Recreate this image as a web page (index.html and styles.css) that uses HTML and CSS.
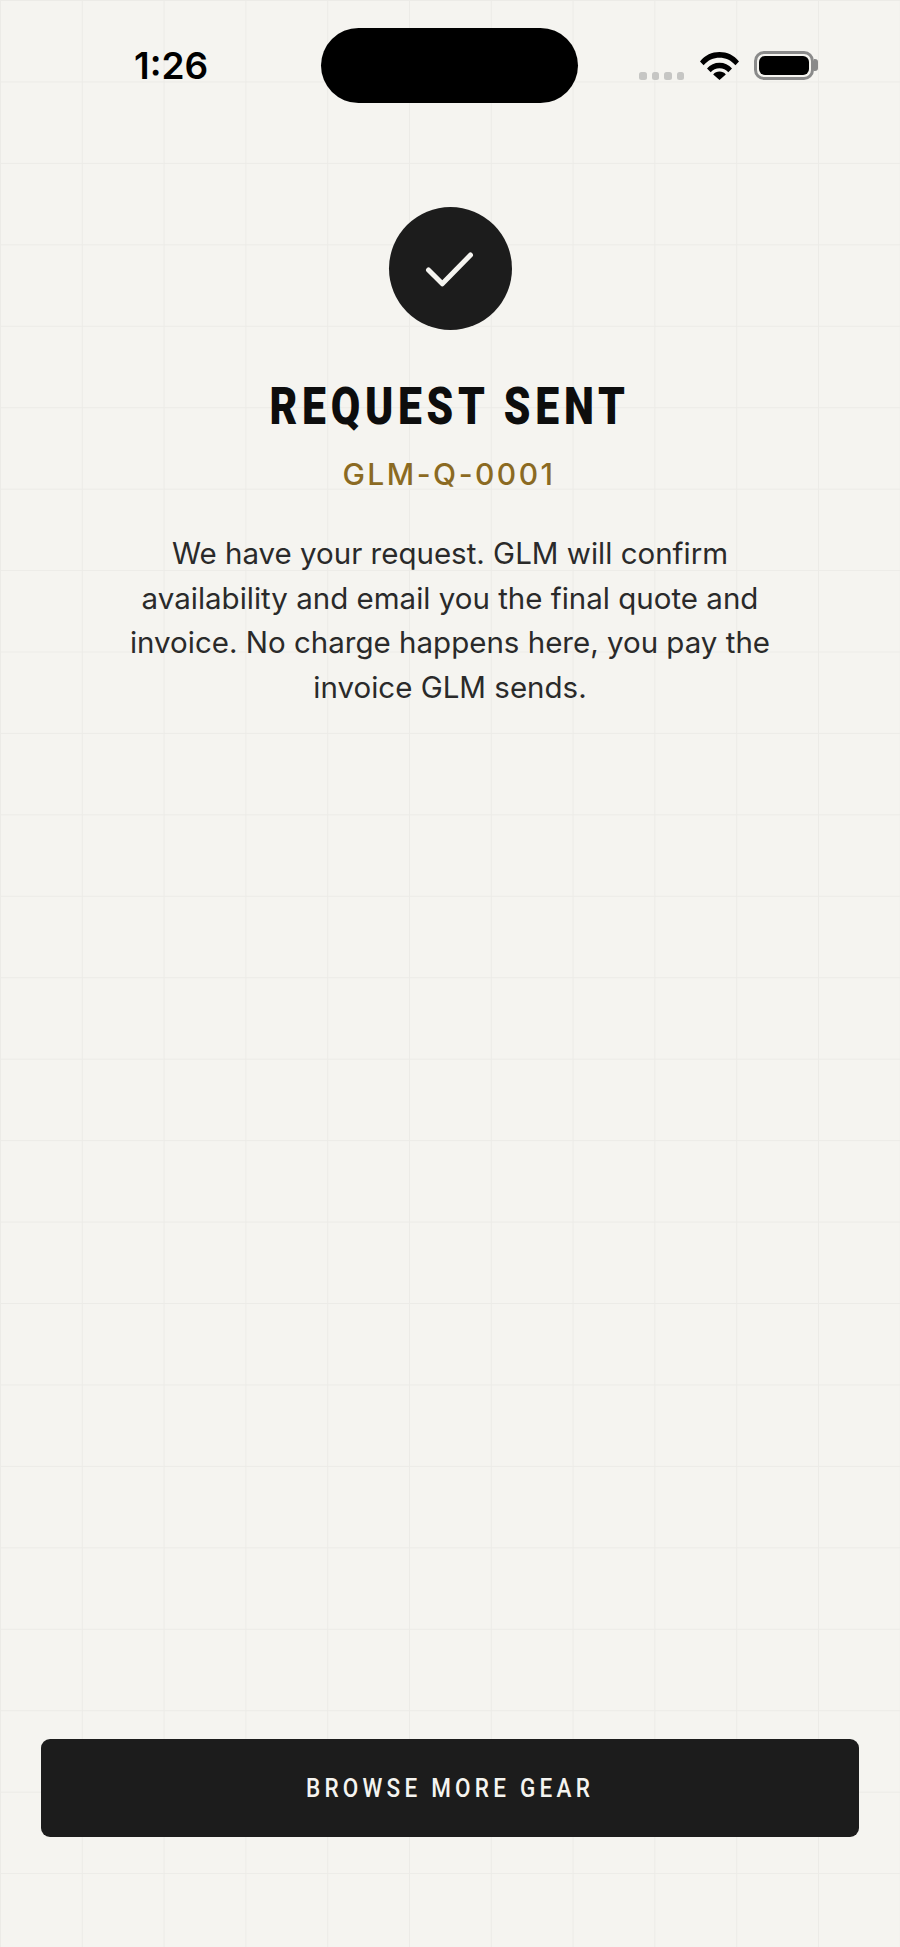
FILE: index.html
```html
<!DOCTYPE html>
<html lang="en">
  <head>
    <meta charset="UTF-8" />
    <meta name="viewport" content="width=device-width, initial-scale=1.0" />
    <title>Request Sent</title>
    <link rel="stylesheet" href="styles.css">
  </head>
  <body>
    <div class="page">
      <header class="status-bar">
        <div class="status-time">1:26</div>
        <div class="island"></div>
        <div class="status-icons">
          <div class="signal-dots">
            <span class="dot"></span>
            <span class="dot"></span>
            <span class="dot"></span>
            <span class="dot"></span>
          </div>
          <svg class="wifi" width="39" height="29" viewBox="0 0 39 29">
            <path d="M0 10.5C5 4 12 1 19.5 1S34 4 39 10.5l-3.6 3.7C31 9.2 25.5 6.8 19.5 6.8S8 9.2 3.6 14.2z" />
            <path d="M7 17.6C10.2 13.8 14.6 11.800 19.5 11.800s9.3 2 12.5 5.800l-3.700 3.700c-2.300-2.700-5.300-4.100-8.800-4.100s-6.500 1.400-8.800 4.100z" />
            <path d="M13.200 23.400c1.600-1.800 3.800-2.800 6.300-2.800s4.700 1 6.300 2.800L19.500 29z" />
          </svg>
          <div class="battery">
            <div class="battery-level"></div>
          </div>
        </div>
      </header>

      <main class="confirmation">
        <div class="check-circle">
          <svg width="54" height="40" viewBox="0 0 54 40">
            <path d="M5.500 21L19.300 34.800L47.500 6" />
          </svg>
        </div>
        <h1 class="title"><span class="title-text">REQUEST SENT</span></h1>
        <p class="quote-code">GLM-Q-0001</p>
        <p class="message">We have your request. GLM will confirm availability and email you the final quote and invoice. No charge happens here, you pay the invoice GLM sends.</p>
      </main>

      <footer class="actions">
        <button class="browse-btn" type="button"><span class="browse-text">BROWSE MORE GEAR</span></button>
      </footer>
    </div>
  </body>
</html>
```

FILE: styles.css
```css
body {
  margin: 0;
  padding: 0;
  font-family: Inter, "Liberation Sans", sans-serif;
  background-color: #f5f4f0;
}

.page {
  display: flex;
  flex-direction: column;
  height: 1947px;
  background-color: #f5f4f0;
  background-image:
    linear-gradient(to right, #ecebe7 1px, transparent 1px),
    linear-gradient(to bottom, #ecebe7 1px, transparent 1px);
  background-size: 81.8px 81.45px;
}

/* Status bar */
.status-bar {
  display: grid;
  grid-template-columns: 321px 257px 1fr;
  height: 75px;
  padding: 28px 0 0;
}

.status-time {
  padding: 17px 0 0 134px;
  font-size: 37px;
  font-weight: 600;
  line-height: 42px;
  color: #000;
}

.island {
  background-color: #000;
  border-radius: 38px;
}

.status-icons {
  display: flex;
  align-items: flex-start;
  padding: 23px 0 0 61px;
}

.signal-dots {
  display: flex;
  gap: 5px;
  margin-top: 21px;
  margin-right: 16px;
}

.dot {
  width: 7.500px;
  height: 7.500px;
  border-radius: 2.500px;
  background-color: #c6c6c4;
}

.wifi {
  fill: #000;
  margin-right: 15px;
}

.battery {
  position: relative;
  box-sizing: border-box;
  width: 60px;
  height: 29px;
  padding: 2px;
  border: 3px solid #8a8a8a;
  border-radius: 10px;
}

/* battery cap */
.battery::after {
  content: "";
  position: absolute;
  top: 5px;
  right: -7px;
  width: 4px;
  height: 12px;
  border-radius: 0 3px 3px 0;
  background-color: #8a8a8a;
}

.battery-level {
  height: 100%;
  border-radius: 6px;
  background-color: #000;
}

/* Confirmation */
.confirmation {
  flex: 1;
  display: flex;
  flex-direction: column;
  align-items: center;
  padding-top: 104px;
}

.check-circle {
  display: flex;
  align-items: center;
  justify-content: center;
  width: 123px;
  height: 123px;
  border-radius: 50%;
  background-color: #1c1c1c;
}

.check-circle svg {
  fill: none;
  stroke: #f5f4f0;
  stroke-width: 5;
  stroke-linecap: round;
  stroke-linejoin: round;
}

.title {
  margin: 47px 0 0;
  font-family: Roboto, sans-serif;
  font-size: 52px;
  font-weight: 900;
  line-height: 60px;
  letter-spacing: 5.800px;
  white-space: nowrap;
  color: #0d0d0d;
}

/* the heading face is narrower than Roboto */
.title-text {
  display: inline-block;
  transform: scaleX(0.82);
}

.quote-code {
  margin: 19px 0 0;
  padding-right: 2px;
  font-size: 30px;
  font-weight: 450;
  line-height: 36px;
  letter-spacing: 2.500px;
  color: #8b6a22;
}

.message {
  width: 670px;
  margin: 39px 0 0;
  font-size: 29.500px;
  line-height: 44.700px;
  text-align: center;
  color: #2a2a2a;
}

/* Bottom button */
.actions {
  padding: 0 41px 110px;
}

.browse-btn {
  display: block;
  width: 100%;
  height: 98px;
  border: none;
  border-radius: 9px;
  background-color: #1c1c1c;
  color: #f5f4f0;
  font-family: Roboto, sans-serif;
  font-size: 25px;
  font-weight: 500;
  letter-spacing: 4.700px;
  white-space: nowrap;
  cursor: pointer;
}

.browse-text {
  display: inline-block;
  transform: scaleX(0.9);
}
```
